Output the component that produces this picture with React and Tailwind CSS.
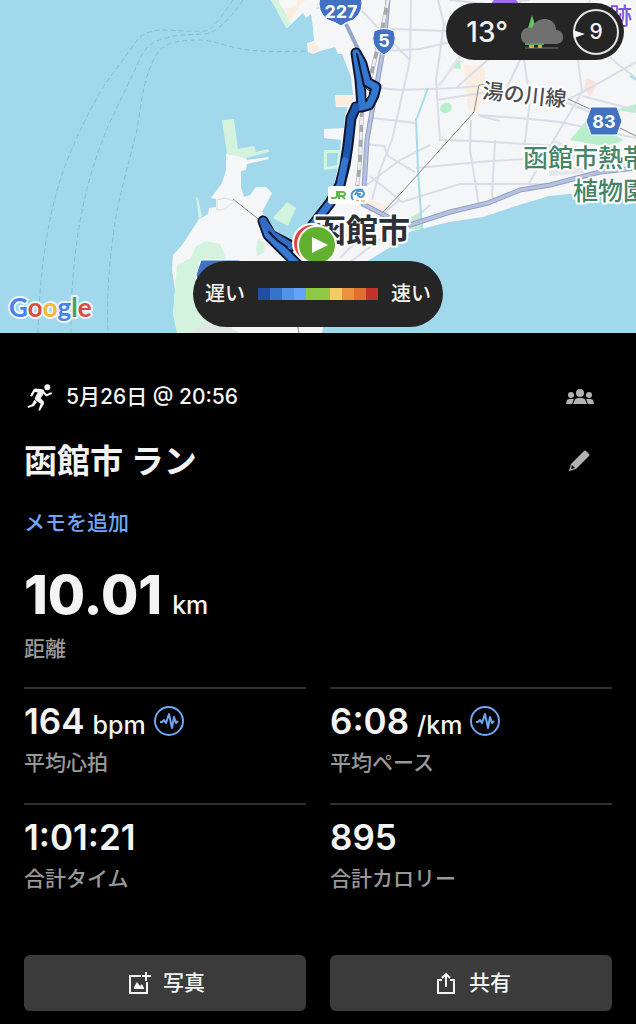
import React from "react";

const paceColors = [
  "bg-[#1f50a5]",
  "bg-[#3674c9]",
  "bg-[#5094ea]",
  "bg-[#64a3f8]",
  "bg-[#8fc844]",
  "bg-[#8fc844]",
  "bg-[#f3cb60]",
  "bg-[#ec9140]",
  "bg-[#df7030]",
  "bg-[#c4322b]",
];

const stats = [
  { value: "164", unit: "bpm", label: "平均心拍", graph: true },
  { value: "6:08", unit: "/km", label: "平均ペース", graph: true },
  { value: "1:01:21", label: "合計タイム" },
  { value: "895", label: "合計カロリー" },
];

function RouteMap() {
  return (
    <svg
      className="h-full w-full"
      viewBox="0 0 636 333"
      preserveAspectRatio="xMidYMid slice"
      role="img"
      aria-label="ルートマップ"
    >
      <rect width="636" height="333" fill="#a1d8eb" />

      {/* ferry lines */}
      <g fill="none" stroke="#7fbfd6" strokeWidth="1" strokeDasharray="5 3">
        <path d="M233 0C222 16 214 28 206 31C190 32 175 30 160 30Q146 31 138 39L103 87C82 124 66 158 56 194C46 234 40 270 38 333" />
        <path d="M243 0C230 20 216 32 206 34C190 35 178 34 166 38C150 42 146 48 142 55L110 122C92 164 86 190 80 222C74 256 71 290 71 333" />
        <path d="M306 51C280 52 256 52 236 48C220 44 210 40 200 40C180 40 166 42 158 52C144 74 142 98 137 130C124 180 117 206 114 230C108 270 107 300 108 333" />
      </g>

      {/* land */}
      <path
        d="M271 0L287 28L303 13L306 18L311 14L313 28L314 41L307 43L308 52L313 54L320 51L335 47L338 54L342 54L351 77L353 95L335 95L336 107L348 107L345 115L344 128L324 129L324 138L341 140L340 153L338 166L333 190L322 208L300 232L288 246L278 235L270 222L262 212L272 193L266 187L256 187L250 195L244 197L241 187L241 171L246 170L247 164L269 159L268 157L247 160L246 158L238 155L226 154L226 170L222 183L211 198L216 199L216 207L209 208L208 214L199 219L190 233L182 245L173 255L172 270L175 290L173 315L178 325L177 333L322 333C328 300 345 276 369 260L389 248L409 232L449 222L483 217L516 206L549 196L599 191L636 186V0Z"
        fill="#f5f6f8"
      />
      <g fill="#d3f3df">
        <path d="M222 120L234 119L238 149L254 146L256 152L268 149L269 152L246 158L227 154Z" />
        <path d="M287 202L296 208L288 226L273 218Z" />
        <path d="M196 197L199 219L202 216L198 198Z" />
        <path d="M258 239L265 243L264 253L257 256L256 248Z" />
        <path d="M196 246L206 241L220 244L226 258L232 275V333H177L173 315L175 290L177 265L191 258Z" />
        <path d="M324 150H342L340 168L324 170ZM327 153V167L337 165L338 153Z" fillRule="evenodd" />
        <path d="M271 0L286 28L291 24L279 0Z" />
      </g>
      <path d="M190 333L212 318L240 333Z" fill="#dfe8e2" />
      <g fill="#b8efcb">
        <path d="M451 68L459 57L461 69Z" />
        <ellipse cx="446" cy="108" rx="6" ry="5" transform="rotate(-25 446 108)" />
        <path d="M570 140L586 121L624 140L610 147L586 143Z" />
        <path d="M615 110L636 104V113Z" />
        <path d="M410 218L420 212L421 229H409Z" />
      </g>
      <g fill="#fbeee0">
        <path d="M464 65L484 66L486 82L478 112L468 110L466 88Z" />
        <path d="M368 200L388 205L384 214L366 208Z" />
        <path d="M281 0L290 22L300 5L306 0Z" />
        <path d="M307 44L315 42L320 50L312 53Z" />
        <path d="M335 96H352V106H336Z" />
      </g>
      <path d="M587 78L598 83L590 97L584 88Z" fill="#fde1de" />
      <path d="M548 150L556 140L578 152L584 173L549 176Z" fill="#e4e6eb" />
      <circle cx="605" cy="2" r="6" fill="#ffffff" />
      <ellipse cx="288" cy="2" rx="9" ry="6" fill="#f8f8f9" />

      {/* streets */}
      <g fill="none" stroke="#d9dde6" strokeWidth="2">
        <path d="M366 87L401 90L456 88L478 86M382 51L420 49L460 40L480 44" />
        <path d="M411 0L410 60L400 105L392 140L380 170L372 200" />
        <path d="M438 0L444 24L436 80L440 140L475 141L560 146" />
        <path d="M390 29L448 31M372 118L416 123M364 144L384 146L388 156L415 172" />
        <path d="M524 60L530 100L524 150M478 115L530 119L560 122M471 120L470 150L479 206" />
        <path d="M495 140L492 196L497 204M416 168L490 161L580 156L636 166" />
        <path d="M370 176L402 202L460 184L560 184L600 172" />
        <path d="M578 60L582 92L545 155L528 185M520 60L506 90M600 48L620 66L636 78" />
        <path d="M582 96L636 110M556 106L590 88L636 62M560 122L636 138" />
        <path d="M352 0L380 30L410 60M316 8L345 6M449 0L486 4" />
        <path d="M340 258L385 212L400 200M350 262L398 226M330 250L370 214" />
        <path d="M590 0L575 60M500 3L530 0M480 116L500 121M520 0V6" />
        <path d="M456 88L490 58M437 100L500 90L550 96L590 112" />
        <path d="M430 205L405 228M360 190L400 160L430 145" />
      </g>
      <path d="M439 86L456 62L476 34" fill="none" stroke="#e1e5ec" strokeWidth="3" />
      <path d="M217 200L217 210L225 209L234 201L225 198Z" fill="none" stroke="#dddde2" strokeWidth="1" />
      <path d="M416 118L418 170L422 229M417 118L428 88M630 76L636 80" fill="none" stroke="#a5dbe9" strokeWidth="2" />

      {/* national roads */}
      <g fill="none" strokeLinejoin="round">
        <path d="M388 0L384 45L374 100L367 140L363 204L386 216L410 225L450 212L488 203L520 190L550 185L600 172L636 168" stroke="#8e9fc8" strokeWidth="5" />
        <path d="M388 0L384 45L374 100L367 140L363 204L386 216L410 225L450 212L488 203L520 190L550 185L600 172L636 168" stroke="#b8c2de" strokeWidth="3" />
        <path d="M346 24L358 49" stroke="#98a6c9" strokeWidth="4" />
      </g>

      {/* railways */}
      <g fill="none">
        <path d="M388 0L383 25L370 80L362 110L360 160L357 190" stroke="#a7a9ad" strokeWidth="4" />
        <path d="M388 0L383 25L370 80L362 110L360 160L357 190" stroke="#ececee" strokeWidth="3" strokeDasharray="8 7" />
        <path d="M233 199L262 222M382 213L402 192L474 112L479 85L490 84M568 99L590 109M620 128L636 136M299 333L297 322" stroke="#8b8b8f" strokeWidth="1" />
      </g>

      {/* shields */}
      <g fill="#4272c1" stroke="#ffffff" strokeWidth="1">
        <path d="M320 -4Q340 -3 361 -4Q365 12 353 20Q346 22 341 26Q335 22 328 20Q316 12 320 -4Z" />
        <path d="M374 31Q384 26 394 31Q399 47 384 55Q369 47 374 31Z" />
        <path d="M591 107H617L622 121L617 135H591L586 121Z" />
        <path d="M201 260H240V290H201L196 275Z" />
      </g>
      <g
        fill="#ffffff"
        fontFamily="Inter, 'Liberation Sans', sans-serif"
        fontWeight="700"
        fontSize="18"
        textAnchor="middle"
      >
        <text x="341" y="18">227</text>
        <text x="384" y="47">5</text>
        <text x="604" y="128">83</text>
      </g>
      <circle cx="505" cy="10" r="15" fill="#9f6af0" />

      {/* recorded run */}
      <g fill="none" strokeLinejoin="round" strokeLinecap="round">
        <path d="M356 53L360 80L362 106M356 53L362 64L367 82L376 87L374 95L369 105L362 107L356 107L351 118L348 145L345 165L340 185L330 203L312 226" stroke="#0c1730" strokeWidth="11" />
        <path d="M263 221L271 235L292 246M263 221L268 235L283 250L299 266" stroke="#0c1730" strokeWidth="11" />
        <path d="M356 53L360 80L362 106M356 53L362 64L367 82L376 87L374 95L369 105L362 107L356 107" stroke="#3577cf" strokeWidth="7" />
        <path d="M356 107L351 118L348 145L346 158" stroke="#1f57ae" strokeWidth="7" />
        <path d="M345 161L340 185L330 203L312 226" stroke="#3577d0" strokeWidth="7" />
        <path d="M263 221L268 235L283 250L299 266" stroke="#3979d4" strokeWidth="7" />
        <path d="M263 221L273 235L291 246" stroke="#326bc0" strokeWidth="7" />
        <path d="M357 54L364 86M269 232L278 241L287 247" stroke="#0c1730" strokeWidth="2" />
        <path d="M366 88L370 91L369 96L366 99Z" fill="#e8ecf2" stroke="#0c1730" strokeWidth="1" />
      </g>

      {/* station */}
      <rect x="328" y="186" width="19" height="18" rx="3" fill="#ffffff" />
      <rect x="348" y="186" width="20" height="18" rx="3" fill="#ffffff" />
      <path d="M337 191V196Q337 198 334 198H331M339 199V192H342Q345 192 345 194Q345 196 342 196H340M342 196L345 199" fill="none" stroke="#64b553" strokeWidth="2" />
      <path d="M353 200C349 193 354 188 363 190M355 195C357 190 364 189 364 194C363 198 358 198 358 194L361 194" fill="none" stroke="#4d96d0" strokeWidth="2" />
      <path d="M356 200L359 201M361 201H365" stroke="#e99656" strokeWidth="1" />

      {/* place names */}
      <g
        fontFamily="Inter, 'Noto Sans CJK JP', sans-serif"
        stroke="#ffffff"
        strokeLinejoin="round"
        paintOrder="stroke"
      >
        <text x="314" y="242" fontSize="32" fontWeight="700" strokeWidth="4" fill="#2d3036">函館市</text>
        <text x="482" y="98" fontSize="21" fontWeight="500" strokeWidth="4" fill="#4a4c50" transform="rotate(6 482 98)">湯の川線</text>
        <text x="523" y="167" fontSize="25" fontWeight="500" strokeWidth="4" fill="#468468">函館市熱帯</text>
        <text x="573" y="200" fontSize="25" fontWeight="500" strokeWidth="4" fill="#468468">植物園</text>
        <text x="609" y="24" fontSize="23" fontWeight="500" strokeWidth="3" fill="#7d55dc">跡</text>
      </g>

      {/* finish and start pins */}
      <circle cx="312" cy="243" r="19" fill="#e5423b" stroke="#ffffff" strokeWidth="2" />
      <circle cx="317" cy="245" r="19" fill="#61b030" stroke="#ffffff" strokeWidth="2" />
      <path d="M312 237L328 245L312 253Z" fill="#ffffff" />

      <text
        x="9"
        y="317"
        fontFamily="Lato, sans-serif"
        fontSize="26"
        fontWeight="700"
        stroke="#eaf6fa"
        strokeWidth="4"
        strokeLinejoin="round"
        paintOrder="stroke"
      >
        <tspan fill="#4a80ea">G</tspan>
        <tspan fill="#db4c40">o</tspan>
        <tspan fill="#f0b93a">o</tspan>
        <tspan fill="#4a80ea">g</tspan>
        <tspan fill="#43a25c">l</tspan>
        <tspan fill="#db4c40">e</tspan>
      </text>
    </svg>
  );
}

function WeatherIcon() {
  return (
    <svg className="h-9 w-11 shrink-0" viewBox="0 0 44 36" aria-hidden="true">
      <path d="M12 1L16 14H8Z" fill="#63c466" />
      <path d="M5 34H38" stroke="#4e4e4e" strokeWidth="2" />
      <path d="M9 30H14V34H9ZM18 30H22V34H18Z" fill="#e6a53c" />
      <path d="M9 30C3 30 1 26 1 22C1 16 6 12 12 14C15 7 20 5 25 5C32 5 36 10 36 16C40 16 43 19 43 23C43 28 40 30 35 30Z" fill="#707070" />
      <path d="M5 29H24V31H5Z" fill="#4da550" />
    </svg>
  );
}

function WindDial() {
  return (
    <div className="relative flex size-12 shrink-0 items-center justify-center">
      <svg className="absolute inset-0 size-12" viewBox="0 0 48 48" aria-hidden="true">
        <circle cx="24" cy="24" r="22" fill="none" stroke="#e4e4e4" strokeWidth="2" />
        <path d="M1 22L13 26L2 30Z" fill="#f4f4f4" />
      </svg>
      <span className="text-[21px] font-medium">9</span>
    </div>
  );
}

function RunnerIcon() {
  return (
    <svg className="h-7 w-7" viewBox="78 34 84 84" aria-hidden="true">
      <circle cx="142" cy="47" r="9" fill="#f4f4f4" />
      <path d="M111 51L125 52Q136 56 132 65L122 80L131 89Q134 93 131 98L120 117L115 116L122 96L107 86Q102 82 106 76L113 62L104 61L96 75L90 72L100 54Q103 50 111 51Z" fill="#f4f4f4" />
      <path d="M130 61L139 71L155 64" fill="none" stroke="#f4f4f4" strokeWidth="6" />
      <path d="M103 84L111 91L102 103L84 109L83 104L96 98Z" fill="#f4f4f4" />
    </svg>
  );
}

function GroupIcon() {
  return (
    <svg className="h-4 w-7" viewBox="0 0 28 16" fill="#b2b2b2" aria-hidden="true">
      <circle cx="14" cy="4" r="4" />
      <circle cx="5" cy="6" r="3" />
      <circle cx="23" cy="6" r="3" />
      <path d="M7 15L9 10.500Q10 9 12 9H16Q18 9 19 10.500L21 15Z" />
      <path d="M0 15L1 11Q2 10 4 10H8L6 15ZM28 15L27 11Q26 10 24 10H20L22 15Z" />
    </svg>
  );
}

function PencilIcon() {
  return (
    <svg className="size-[22px]" viewBox="0 0 22 22" aria-hidden="true">
      <path d="M16 1Q17 0 18 1L21 4Q22 5 21 6L8 19L1 21L3 14Z" fill="#b2b2b2" />
      <path d="M4 15L7 18L3 19Z" fill="#000000" />
    </svg>
  );
}

function GraphIcon() {
  return (
    <svg className="size-[30px]" viewBox="0 0 30 30" fill="none" stroke="#6fa6f6" aria-hidden="true">
      <circle cx="15" cy="15" r="14" strokeWidth="2" />
      <path d="M6 16H8L10 14L12 17L15 8L18 22L20 11L22 17L24 15" strokeWidth="2" strokeLinejoin="round" />
    </svg>
  );
}

function AddPhotoIcon() {
  return (
    <svg className="size-[22px]" viewBox="0 0 22 22" fill="none" stroke="#f4f4f4" strokeWidth="2" aria-hidden="true">
      <path d="M12 4H1V21H18V10" />
      <path d="M17 0V9M13 4H22" />
      <path d="M5 17V15L8 10L11 14L13 12L15 16V17Z" fill="#f4f4f4" stroke="none" />
    </svg>
  );
}

function ShareIcon() {
  return (
    <svg className="size-[22px]" viewBox="0 0 22 22" fill="none" stroke="#f4f4f4" strokeWidth="2" aria-hidden="true">
      <path d="M7 8H3V21H19V8H15" />
      <path d="M11 15V2M7 6L11 2L15 6" />
    </svg>
  );
}

function Stat({ value, unit, label, graph }) {
  return (
    <div className="h-[116px] border-t-2 border-[#2f2f2f] pt-3">
      <div className="flex h-10 items-center gap-2">
        <p className="flex items-baseline gap-2">
          <span className="text-[35px] leading-10 font-semibold">{value}</span>
          {unit && <span className="text-[25px] leading-none font-medium">{unit}</span>}
        </p>
        {graph && (
          <button type="button" aria-label={`${label}のグラフ`}>
            <GraphIcon />
          </button>
        )}
      </div>
      <p className="mt-2 text-[21px] leading-7 font-medium text-[#989898]">{label}</p>
    </div>
  );
}

export default function App() {
  return (
    <main className="min-h-screen bg-black font-[Inter,'Noto_Sans_CJK_JP',sans-serif] text-[#f4f4f4]">
      <header className="relative h-[333px] overflow-hidden">
        <RouteMap />

        <div className="absolute top-[3px] right-3 flex h-[57px] items-center gap-2 rounded-full bg-[#252525] pr-1 pl-5">
          <span className="pr-1 text-[28px] font-medium">13°</span>
          <WeatherIcon />
          <WindDial />
        </div>

        <div className="absolute inset-x-0 bottom-[6px] flex justify-center">
          <div className="flex h-[66px] items-center gap-[13px] rounded-full bg-[#252525] px-3 text-[20px] font-medium">
            <span>遅い</span>
            <div className="flex">
              {paceColors.map((color, i) => (
                <span key={i} className={`h-3 w-3 ${color}`} />
              ))}
            </div>
            <span>速い</span>
          </div>
        </div>
      </header>

      <section className="px-6 pt-12 pb-3">
        <div className="flex h-8 items-center justify-between pr-[18px]">
          <div className="flex items-center gap-3 pl-0.5">
            <RunnerIcon />
            <p className="text-[21px] font-medium">5月26日 @ 20:56</p>
          </div>
          <button type="button" aria-label="公開範囲">
            <GroupIcon />
          </button>
        </div>

        <div className="mt-6 flex h-12 items-center justify-between pr-[22px]">
          <h1 className="text-[33px] leading-[48px] font-bold">函館市 ラン</h1>
          <button type="button" aria-label="タイトルを編集">
            <PencilIcon />
          </button>
        </div>

        <a href="#memo" className="mt-6 block text-[21px] leading-7 font-medium text-[#6fa6f6]">
          メモを追加
        </a>

        <p className="mt-[26px] flex h-16 items-baseline gap-2.5">
          <span className="text-[54px] leading-[64px] font-extrabold">10.01</span>
          <span className="text-[25px] leading-none font-medium">km</span>
        </p>
        <p className="mt-2 text-[21px] leading-7 font-medium text-[#989898]">距離</p>

        <div className="mt-6 grid grid-cols-2 gap-x-6">
          {stats.map((stat) => (
            <Stat key={stat.label} {...stat} />
          ))}
        </div>

        <div className="mt-9 grid grid-cols-2 gap-6">
          <button
            type="button"
            className="flex h-14 items-center justify-center gap-3 rounded-md bg-[#3b3b3b] pl-1 text-[21px] font-medium"
          >
            <AddPhotoIcon />
            写真
          </button>
          <button
            type="button"
            className="flex h-14 items-center justify-center gap-3 rounded-md bg-[#3b3b3b] pl-1 text-[21px] font-medium"
          >
            <ShareIcon />
            共有
          </button>
        </div>
      </section>
    </main>
  );
}
